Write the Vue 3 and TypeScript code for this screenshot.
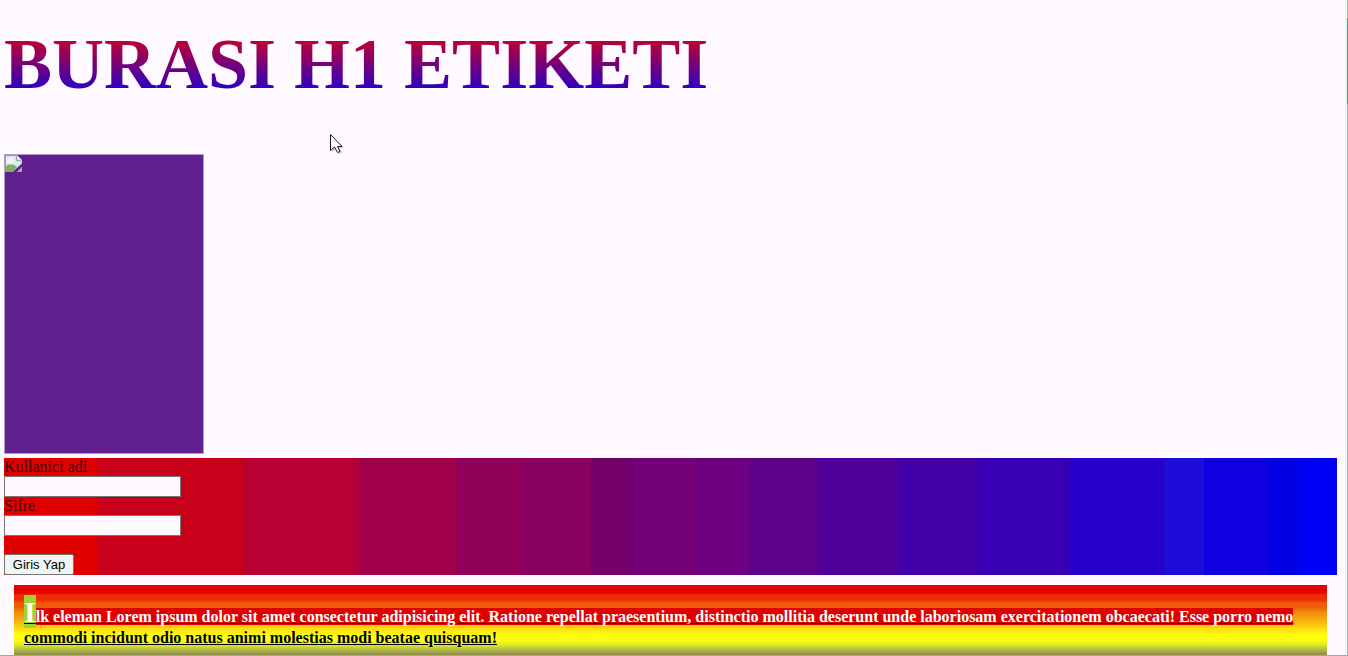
<script setup lang="ts">
import { ref } from 'vue'

const username = ref('')
const password = ref('')
</script>

<template>
  <div class="window">
    <main class="page">
      <h1 class="title">BURASI H1 ETIKETI</h1>

      <div class="picture">
        <svg width="17" height="17" viewBox="0 0 16 16" aria-hidden="true">
          <path d="M0 0H11L16 5V8L7 16H0Z" fill="#c4d8dc" />
          <path d="M1 1H10V6H15V8L7 15H1Z" fill="#d8eeee" />
          <path d="M1 3H8V8H1Z" fill="#edf6f4" />
          <path d="M0 11L3 9H8L11 11L7 16H0Z" fill="#83ad61" />
          <path d="M0 0H11V1H1V15H7V16H0Z" fill="#9b9aa4" />
          <path d="M11 0L16 5H11Z" fill="#f1fbfa" />
          <path d="M11 1V5H15" fill="none" stroke="#9a91aa" />
          <path d="M16 11V16H11Z" fill="#9db487" />
        </svg>
      </div>

      <form class="login" @submit.prevent>
        <label for="username">Kullanici adi</label>
        <input id="username" v-model="username" type="text" autocomplete="off" />
        <label for="password">Sifre</label>
        <input id="password" v-model="password" type="password" autocomplete="off" />
        <button type="submit">Giris Yap</button>
      </form>

      <p class="card">Ilk eleman Lorem ipsum dolor sit amet consectetur adipisicing elit. Ratione repellat praesentium, distinctio mollitia deserunt unde laboriosam exercitationem obcaecati! Esse porro nemo commodi incidunt odio natus animi molestias modi beatae quisquam!</p>
    </main>
    <div class="scroll-edge"></div>

    <svg class="pointer" width="16" height="22" viewBox="0 0 16 22" aria-hidden="true">
      <path d="M2 2V18L6 15L9 20L12 19L10 14H14Z" fill="#d5c9d4" />
      <path d="M0.5 0.5V16.5L4.5 13L7.5 18.5L10 17.5L7.5 12.5H12Z" fill="#fff" stroke="#301020" />
    </svg>
  </div>
</template>

<style>
body {
  margin: 0;
  background: #fefaff;
}
</style>

<style scoped>
.window {
  position: relative;
  display: flex;
  height: 100vh;
  overflow: hidden;
  box-sizing: border-box;
  border-bottom: 1px solid #aaa3ad;
  background: #fefaff;
  color: #000;
  font-family: "Liberation Serif", "Times New Roman", serif;
  font-size: 16px;
}

.page {
  flex: 1;
  min-width: 0;
  padding: 24px 8px 0 4px;
}

.title {
  margin: 0 0 50px;
  font-size: 72px;
  line-height: 80px;
  background: linear-gradient(to bottom, #f00000, #0000f0);
  background-clip: text;
  -webkit-background-clip: text;
  color: transparent;
}

.picture {
  box-sizing: border-box;
  width: 200px;
  height: 300px;
  margin-bottom: 4px;
  border: 1px solid #b49bc8;
  background: #602090;
}

.picture svg {
  display: block;
}

.login {
  display: flex;
  flex-direction: column;
  align-items: flex-start;
  background: linear-gradient(
    to right,
    #e00000 0 7%,
    #c8001a 7% 18%,
    #b80034 18% 26%,
    #a0004a 27% 34%,
    #90005a 34% 39%,
    #880062 39% 44%,
    #74006a 44% 47%,
    #740078 47% 52%,
    #6c0080 52% 56%,
    #5e008a 56% 61%,
    #500098 61% 67%,
    #4400a8 67% 73%,
    #3800b4 73% 80%,
    #2800cc 80% 87%,
    #1e0cd8 87% 90%,
    #1000e0 90% 95%,
    #0400e4 95% 97%,
    #0000f4 97%
  );
}

.login label {
  line-height: 18px;
  color: #400808;
}

.login input {
  box-sizing: border-box;
  width: 177px;
  height: 21px;
  margin: 0;
  padding: 1px 2px;
  border: 1px solid #767676;
  border-radius: 0;
  background: #fefaff;
  font: 13px "Liberation Sans", Arial, sans-serif;
}

.login button {
  box-sizing: border-box;
  height: 21px;
  min-width: 70px;
  margin-top: 18px;
  padding: 0 7px;
  border: 1px solid #767676;
  border-radius: 2px;
  background: #eef5f3;
  color: #000;
  font: 13px/19px "Liberation Sans", Arial, sans-serif;
}

.card {
  height: 80px;
  margin: 10px;
  padding: 10px;
  box-sizing: border-box;
  background: linear-gradient(
    to bottom,
    #e80000 0 8px,
    #ee2c04 10px 15px,
    #f05c08 18px 22px,
    #f08c0c 27px,
    #f8b010 36px,
    #ffd810 43px,
    #ffff10 50px 55px,
    #dce828 60px,
    #b0b848 65px,
    #888050 71px
  );
  font-weight: bold;
  text-decoration: underline;
}

.card::first-line {
  background: #e00000;
  color: #fff;
}

.card::first-letter {
  background: #9cd430;
  font-size: 30px;
}

.scroll-edge {
  flex: 0 0 3px;
  box-sizing: border-box;
  border-right: 1px solid;
  border-image: linear-gradient(to bottom, #c8b49c 0 19px, #7c8c84 19px 105px, #b8b0b8 105px) 1;
  background: #e8f4f8;
}

.pointer {
  position: absolute;
  left: 330px;
  top: 134px;
}
</style>
